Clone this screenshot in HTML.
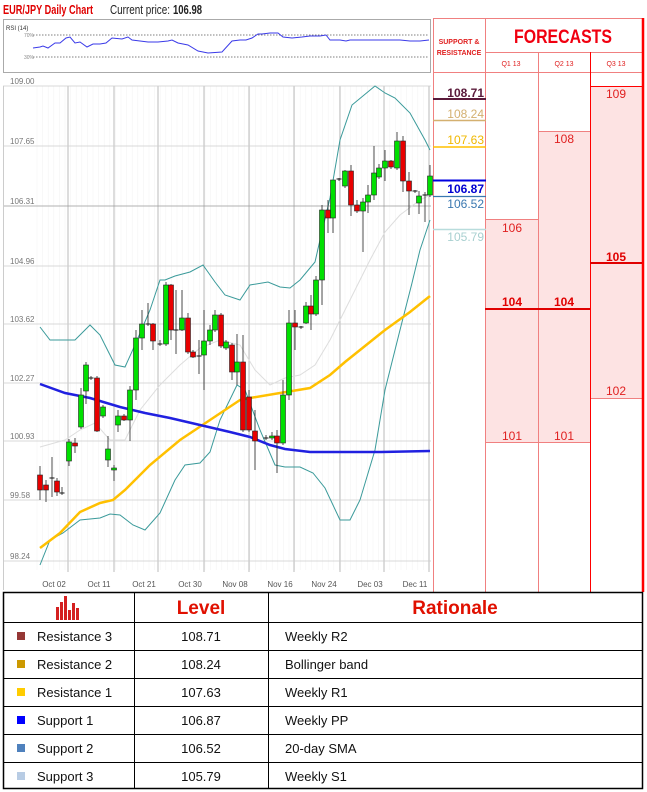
<!DOCTYPE html>
<html><head><meta charset="utf-8"><style>
body{margin:0;width:647px;height:792px;background:#fff;font-family:"Liberation Sans",sans-serif;overflow:hidden}
svg{position:absolute;left:0;top:0}
</style></head><body>
<svg id="s" width="647" height="792" viewBox="0 0 647 792" font-family="Liberation Sans, sans-serif">
<text x="3" y="14" font-size="13" font-weight="bold" fill="#e00000" textLength="90" lengthAdjust="spacingAndGlyphs">EUR/JPY Daily Chart</text>
<text x="110" y="14" font-size="13" fill="#222" textLength="60" lengthAdjust="spacingAndGlyphs">Current price:</text>
<text x="173" y="14" font-size="13" font-weight="bold" fill="#222" textLength="29" lengthAdjust="spacingAndGlyphs">106.98</text>
<rect x="3.5" y="19.5" width="427" height="53" fill="#fff" stroke="#aaa"/>
<text x="6" y="30" font-size="6" fill="#333">RSI (14)</text>
<text x="24" y="37" font-size="5" fill="#888">70%</text>
<text x="24" y="59" font-size="5" fill="#888">30%</text>
<line x1="33" y1="35" x2="429" y2="35" stroke="#555" stroke-dasharray="1.5,1.5" stroke-width="0.8"/>
<line x1="33" y1="57" x2="429" y2="57" stroke="#555" stroke-dasharray="1.5,1.5" stroke-width="0.8"/>
<polyline fill="none" stroke="#3a3ae8" stroke-width="1" points="33,48 40,47 43,46 48,48 55,43 60,43 66,38 70,37 75,43 80,42 87,47 93,44 100,44 106,43 112,38 122,39 128,37 132,40 140,41 148,42 158,42 168,41 172,40 178,43 188,45 198,51 208,53 222,52 232,41 240,40 246,40 252,38 258,34 262,34 270,33 278,33 283,37 292,38 302,37 310,36 320,36 326,35 330,40 340,40 346,41 350,40 360,40 370,40 380,40 390,40 400,40 410,41 420,41 429,40"/>
<g id="chart"></g>
<rect x="485" y="219" width="53" height="223" fill="#fde3e3"/>
<rect x="538" y="131" width="52" height="311" fill="#fde3e3"/>
<rect x="590" y="86" width="52" height="312" fill="#fde3e3"/>
<g stroke="#f08080" stroke-width="1">
<line x1="433.5" y1="18" x2="433.5" y2="592"/>
<line x1="485.5" y1="18" x2="485.5" y2="592"/>
<line x1="538.5" y1="52" x2="538.5" y2="592"/>
<line x1="433" y1="18.5" x2="643" y2="18.5"/>
<line x1="485" y1="52.5" x2="643" y2="52.5"/>
<line x1="433" y1="72.5" x2="643" y2="72.5"/>
<line x1="485" y1="219.5" x2="538" y2="219.5"/>
<line x1="538" y1="131.5" x2="590" y2="131.5"/>
<line x1="485" y1="442.5" x2="590" y2="442.5"/>
<line x1="590" y1="398.5" x2="642" y2="398.5"/>
</g>
<line x1="590.5" y1="52" x2="590.5" y2="592" stroke="#f00"/>
<line x1="590" y1="86.5" x2="642" y2="86.5" stroke="#f00"/>
<line x1="643" y1="18" x2="643" y2="592" stroke="#f00" stroke-width="2.5"/>
<line x1="485" y1="309" x2="590" y2="309" stroke="#e00000" stroke-width="2"/>
<line x1="590" y1="263" x2="642" y2="263" stroke="#e00000" stroke-width="2"/>
<text x="459" y="44" font-size="7" font-weight="bold" fill="#e02020" text-anchor="middle">SUPPORT &amp;</text>
<text x="459" y="55" font-size="7" font-weight="bold" fill="#e02020" text-anchor="middle">RESISTANCE</text>
<text x="563" y="43" font-size="19" font-weight="bold" fill="#f00010" text-anchor="middle" textLength="98" lengthAdjust="spacingAndGlyphs">FORECASTS</text>
<g font-size="7" fill="#e02020" text-anchor="middle"><text x="511" y="66">Q1 13</text><text x="564" y="66">Q2 13</text><text x="616" y="66">Q3 13</text></g>
<g font-size="12" fill="#e02020" text-anchor="middle">
<text x="512" y="232">106</text><text x="564" y="143">108</text><text x="616" y="98">109</text>
<text x="616" y="395">102</text><text x="512" y="440">101</text><text x="564" y="440">101</text>
</g>
<g font-size="12" font-weight="bold" fill="#e00000" text-anchor="middle">
<text x="512" y="306">104</text><text x="564" y="306">104</text><text x="616" y="261">105</text>
</g>
<g font-size="12" text-anchor="end">
<text x="484" y="97" fill="#5a1a3a" font-weight="bold">108.71</text>
<line x1="433" y1="99" x2="486" y2="99" stroke="#5a1a3a" stroke-width="2"/>
<text x="484" y="118" fill="#d4b070">108.24</text>
<line x1="433" y1="120.5" x2="486" y2="120.5" stroke="#d4b070" stroke-width="1.5"/>
<text x="484" y="144" fill="#f0b800">107.63</text>
<line x1="433" y1="147" x2="486" y2="147" stroke="#ffc000" stroke-width="1.5"/>
<line x1="433" y1="180.5" x2="486" y2="180.5" stroke="#0000e0" stroke-width="2"/>
<text x="484" y="193" fill="#0000d0" font-weight="bold">106.87</text>
<line x1="433" y1="196.5" x2="486" y2="196.5" stroke="#3a78b0" stroke-width="1.2"/>
<text x="484" y="208" fill="#3a78b0">106.52</text>
<line x1="433" y1="229.5" x2="486" y2="229.5" stroke="#b8dcdc" stroke-width="1.5"/>
<text x="484" y="241" fill="#a8d0d0">105.79</text>
</g>
<g font-size="13" fill="#111">
<rect x="3.5" y="592.5" width="639" height="196" fill="#fff" stroke="#000" stroke-width="1.5"/>
<g stroke="#000" stroke-width="1">
<line x1="134.5" y1="592" x2="134.5" y2="789"/><line x1="268.5" y1="592" x2="268.5" y2="789"/>
<line x1="3" y1="622.5" x2="643" y2="622.5"/><line x1="3" y1="650.5" x2="643" y2="650.5"/>
<line x1="3" y1="678.5" x2="643" y2="678.5"/><line x1="3" y1="706.5" x2="643" y2="706.5"/>
<line x1="3" y1="734.5" x2="643" y2="734.5"/><line x1="3" y1="762.5" x2="643" y2="762.5"/>
</g>
<g fill="#d42020"><rect x="56" y="607" width="3" height="13"/><rect x="60" y="602" width="3" height="18"/><rect x="64" y="596" width="3" height="24"/><rect x="68" y="610" width="3" height="10"/><rect x="72" y="603" width="3" height="17"/><rect x="76" y="608" width="3" height="12"/></g>
<text x="201" y="614" font-size="19" font-weight="bold" fill="#e01000" text-anchor="middle">Level</text>
<text x="455" y="614" font-size="19" font-weight="bold" fill="#e01000" text-anchor="middle">Rationale</text>
<rect x="17" y="632" width="8" height="8" fill="#953735"/><text x="37" y="641">Resistance 3</text><text x="201" y="641" text-anchor="middle">108.71</text><text x="285" y="641">Weekly R2</text>
<rect x="17" y="660" width="8" height="8" fill="#cc9900"/><text x="37" y="669">Resistance 2</text><text x="201" y="669" text-anchor="middle">108.24</text><text x="285" y="669">Bollinger band</text>
<rect x="17" y="688" width="8" height="8" fill="#ffcc00"/><text x="37" y="697">Resistance 1</text><text x="201" y="697" text-anchor="middle">107.63</text><text x="285" y="697">Weekly R1</text>
<rect x="17" y="716" width="8" height="8" fill="#0000ff"/><text x="37" y="725">Support 1</text><text x="201" y="725" text-anchor="middle">106.87</text><text x="285" y="725">Weekly PP</text>
<rect x="17" y="744" width="8" height="8" fill="#4f81bd"/><text x="37" y="753">Support 2</text><text x="201" y="753" text-anchor="middle">106.52</text><text x="285" y="753">20-day SMA</text>
<rect x="17" y="772" width="8" height="8" fill="#b8cce4"/><text x="37" y="781">Support 3</text><text x="201" y="781" text-anchor="middle">105.79</text><text x="285" y="781">Weekly S1</text>
</g>
</svg>
<script>
var g=document.getElementById('chart'),h='';
for(var x=37;x<431;x+=5.6)h+='<line x1="'+x+'" y1="86" x2="'+x+'" y2="570" stroke="#f3f3f3" stroke-width="0.6"/>';
[68,114,158,204,249,294,340,384,429].forEach(function(x){h+='<line x1="'+x+'" y1="86" x2="'+x+'" y2="572" stroke="#aaa" stroke-width="0.8"/>'});
var ys=[[86,'109.00'],[146,'107.65'],[206,'106.31'],[266,'104.96'],[324,'103.62'],[383,'102.27'],[441,'100.93'],[500,'99.58'],[561,'98.24']];
ys.forEach(function(a,i){h+='<line x1="3" y1="'+a[0]+'" x2="431" y2="'+a[0]+'" stroke="'+(i==2?'#999':'#ccc')+'" stroke-width="0.8"/><text x="10" y="'+(a[0]-2)+'" font-size="8" fill="#777">'+a[1]+'</text>'});
h+='<line x1="3.5" y1="86" x2="3.5" y2="590" stroke="#ccc"/>';
var lb=['Oct 02','Oct 11','Oct 21','Oct 30','Nov 08','Nov 16','Nov 24','Dec 03','Dec 11'],lx=[54,99,144,190,235,280,324,370,415];
lb.forEach(function(t,i){h+='<text x="'+lx[i]+'" y="587" font-size="8" fill="#555" text-anchor="middle">'+t+'</text>'});
function pl(p,c,w){h+='<polyline fill="none" stroke="'+c+'" stroke-width="'+w+'" points="'+p+'"/>'}
pl("40,447 65,440 80,430 95,423 110,440 125,440 140,410 160,385 180,365 200,348 220,340 240,345 255,370 270,385 285,378 300,375 315,365 330,340 350,300 370,260 385,232 400,215 420,200 430,195","#ddd",1);
pl("40,327 50,340 75,340 90,325 100,335 115,365 125,367 135,345 150,310 160,280 165,280 175,276 190,272 203,265 215,282 225,295 240,300 250,285 268,282 280,287 290,288 300,280 315,262 320,240 330,198 340,140 352,105 375,86 385,93 395,98 410,113 425,140 430,150","#3a9a9a",1);
pl("40,565 50,540 63,533 80,520 100,518 110,514 120,515 133,525 145,530 160,513 175,480 185,465 200,463 210,452 220,420 237,385 245,390 260,430 275,465 285,467 300,467 313,473 325,488 340,520 350,520 360,500 375,450 385,390 400,330 412,283 420,250 430,220","#3a9a9a",1);
pl("40,548 60,533 80,512 100,503 113,500 125,490 150,465 180,440 210,420 240,400 250,398 280,393 310,388 330,375 345,362 360,350 385,330 410,312 430,296","#ffc000",2.5);
pl("40,384 65,393 90,398 120,407 145,413 170,418 200,425 230,432 250,437 270,445 285,449 310,452 350,452 380,452 430,451","#2020e0",2.5);
var c=[[40,475,490,'r',466,500],[46,485,490,'r',480,502],[52,478,479,'d',457,497],[57,481,492,'r',478,496],[62,493,494,'d',487,495],[69,442,461,'g',439,466],[75,443,446,'r',438,453],[81,395,427,'g',388,429],[86,365,391,'g',362,404],[91,378,379,'d',376,380],[97,378,431,'r',376,432],[103,407,416,'g',405,418],[108,449,460,'g',436,467],[114,468,469,'g',465,481],[118,416,425,'g',410,432],[124,416,420,'r',414,421],[130,390,420,'g',386,441],[136,338,390,'g',330,400],[142,324,338,'g',310,350],[148,324,325,'d',303,326],[153,324,341,'r',323,350],[160,344,345,'d',340,346],[166,285,344,'g',282,346],[171,285,330,'r',284,340],[176,330,331,'d',290,354],[182,318,330,'g',290,331],[188,318,352,'r',313,354],[193,352,357,'r',350,358],[199,356,357,'d',340,374],[204,341,355,'g',310,390],[210,330,341,'g',325,345],[215,315,330,'g',310,332],[221,315,346,'r',313,348],[226,342,348,'g',340,350],[232,345,372,'r',343,380],[237,362,372,'g',334,385],[243,362,430,'r',335,432],[249,397,430,'r',390,432],[255,431,441,'r',410,470],[266,438,439,'d',435,440],[272,436,438,'g',432,440],[277,436,443,'r',430,473],[283,395,443,'g',380,445],[289,323,395,'g',310,400],[295,323,327,'r',310,350],[301,327,328,'d',326,329],[306,306,323,'g',302,324],[311,306,314,'r',295,330],[316,280,314,'g',276,316],[322,210,280,'g',205,305],[328,210,218,'r',200,233],[333,180,218,'g',195,233],[339,179,180,'d',178,181],[345,171,186,'g',170,188],[351,171,205,'r',165,216],[357,205,211,'r',200,213],[363,202,211,'g',198,252],[368,195,202,'g',185,213],[374,173,195,'g',146,200],[379,168,177,'g',164,179],[385,161,168,'g',150,181],[391,161,167,'r',160,169],[397,141,168,'g',132,170],[403,141,181,'r',136,192],[409,181,191,'r',172,215],[415,191,192,'d',190,193],[419,196,203,'g',191,214],[425,195,196,'d',192,222],[430,176,195,'g',165,197]];
c.forEach(function(a){var x=a[0];h+='<line x1="'+x+'" y1="'+a[4]+'" x2="'+x+'" y2="'+a[5]+'" stroke="#222" stroke-width="0.8"/>';
if(a[3]=='d')h+='<line x1="'+(x-2.5)+'" y1="'+a[1]+'" x2="'+(x+2.5)+'" y2="'+a[1]+'" stroke="#111" stroke-width="1"/>';
else h+='<rect x="'+(x-2.5)+'" y="'+a[1]+'" width="5" height="'+Math.max(2,a[2]-a[1])+'" fill="'+(a[3]=='g'?'#00e000':'#e80000')+'" stroke="#222" stroke-width="0.6"/>';});
g.innerHTML=h;
</script>
</body></html>
